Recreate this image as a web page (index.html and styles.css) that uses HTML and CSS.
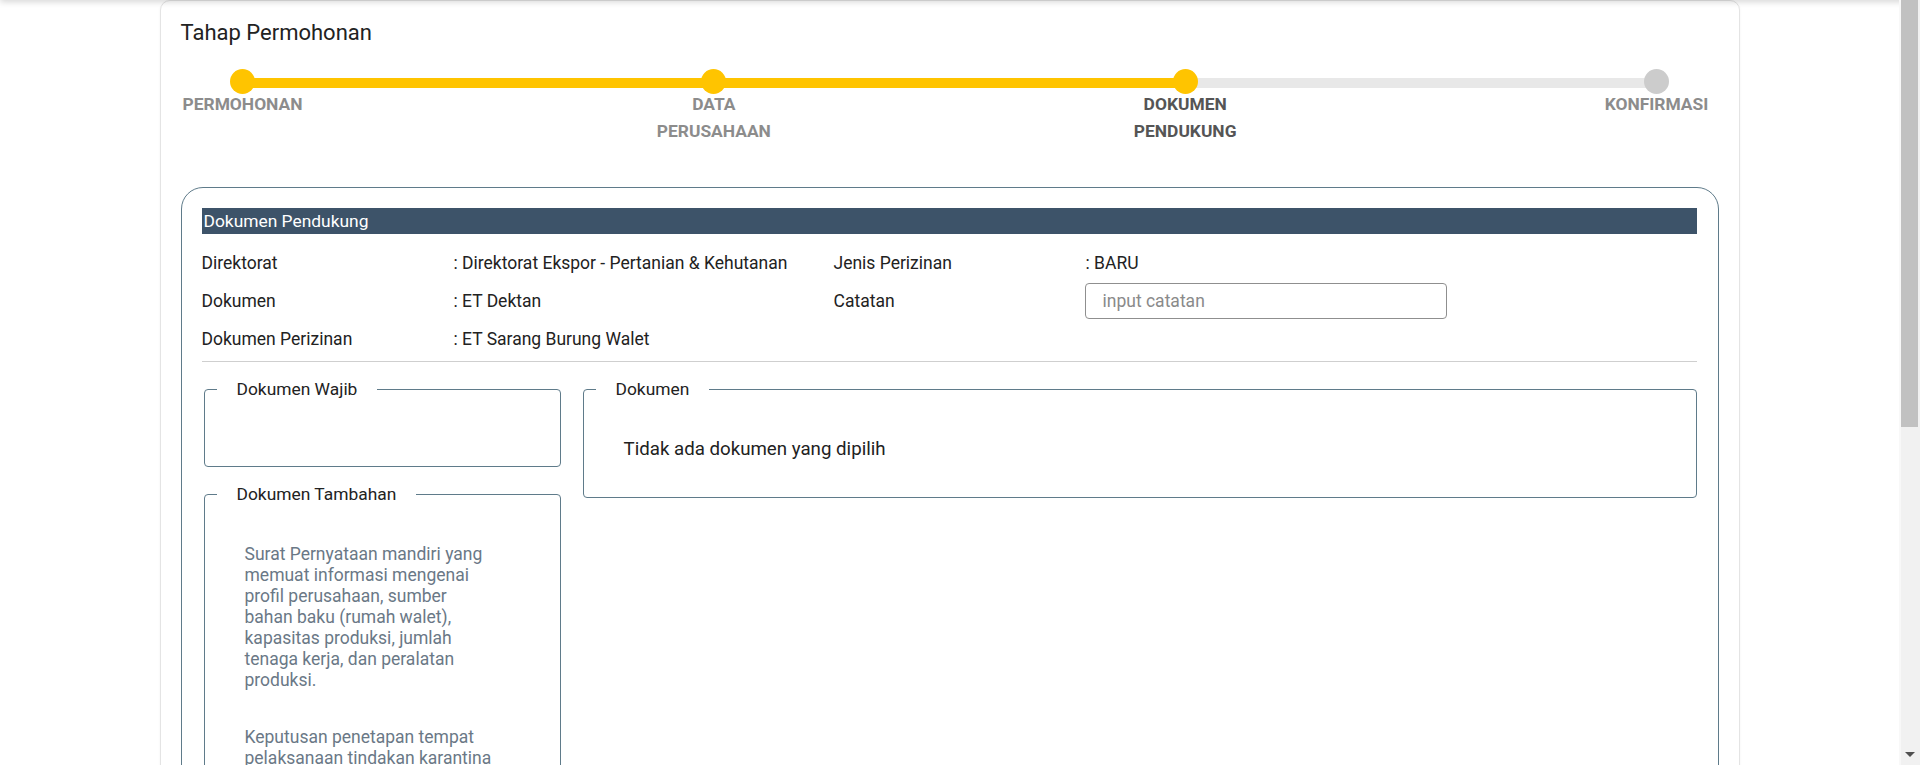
FILE: index.html
```html
<!DOCTYPE html>
<html lang="id">
<head>
<meta charset="utf-8">
<title>Tahap Permohonan</title>
<link rel="stylesheet" href="styles.css">
</head>
<body>
<div class="topshade"></div>
<main class="page">
  <section class="card">
    <h2 class="card-title">Tahap Permohonan</h2>
    <ol class="steps">
      <li class="step done"><span class="dot"></span><span class="label">PERMOHONAN</span></li>
      <li class="step done"><span class="dot"></span><span class="label">DATA PERUSAHAAN</span></li>
      <li class="step current"><span class="dot"></span><span class="label">DOKUMEN PENDUKUNG</span></li>
      <li class="step"><span class="dot"></span><span class="label">KONFIRMASI</span></li>
    </ol>

    <div class="panel">
      <div class="panel-head">Dokumen Pendukung</div>
      <div class="info">
        <div class="info-row">
          <span class="info-label">Direktorat</span>
          <span class="info-value">: Direktorat Ekspor - Pertanian &amp; Kehutanan</span>
          <span class="info-label">Jenis Perizinan</span>
          <span class="info-value">: BARU</span>
        </div>
        <div class="info-row">
          <span class="info-label">Dokumen</span>
          <span class="info-value">: ET Dektan</span>
          <span class="info-label">Catatan</span>
          <span class="info-value"><input class="note-input" type="text" placeholder="input catatan"></span>
        </div>
        <div class="info-row">
          <span class="info-label">Dokumen Perizinan</span>
          <span class="info-value">: ET Sarang Burung Walet</span>
          <span class="info-label"></span>
          <span class="info-value"></span>
        </div>
      </div>
      <hr class="sep">
      <div class="docs">
        <div class="docs-left">
          <fieldset class="box">
            <legend>Dokumen Wajib</legend>
            <ul class="doc-list empty"></ul>
          </fieldset>
          <fieldset class="box extra">
            <legend>Dokumen Tambahan</legend>
            <ul class="doc-list muted">
              <li>Surat Pernyataan mandiri yang<br>memuat informasi mengenai<br>profil perusahaan, sumber<br>bahan baku (rumah walet),<br>kapasitas produksi, jumlah<br>tenaga kerja, dan peralatan<br>produksi.</li>
              <li>Keputusan penetapan tempat<br>pelaksanaan tindakan karantina<br>hewan dari Badan Karantina.</li>
            </ul>
          </fieldset>
        </div>
        <fieldset class="box selected">
          <legend>Dokumen</legend>
          <ul class="doc-list">
            <li class="none">Tidak ada dokumen yang dipilih</li>
          </ul>
        </fieldset>
      </div>
    </div>
  </section>
</main>
<div class="scrollbar"><div class="thumb"></div><div class="arrow-down"></div></div>
</body>
</html>
```
FILE: styles.css
```css
* { box-sizing: border-box; }
html, body { height: 100%; }
body {
  margin: 0;
  overflow: hidden;
  background: #fff;
  font-family: Roboto, "Liberation Sans", Arial, sans-serif;
  font-size: 17.5px;
  color: #222;
}
.topshade {
  position: fixed;
  top: -10px;
  left: 0;
  right: 0;
  height: 10px;
  box-shadow: 0 2px 6px rgba(0,0,0,0.16);
  z-index: 5;
}
.page {
  width: calc(100% - 21px);
}
.card {
  width: 1580px;
  margin: 0 auto;
  background: #fff;
  border: 1px solid #e4e4e4;
  border-radius: 10px;
  box-shadow: 0 1px 3px rgba(0,0,0,0.05);
  padding: 18px 20px 40px;
  min-height: 900px;
}
.card-title {
  margin: 0;
  font-size: 22px;
  font-weight: 400;
  line-height: 28px;
  color: #222;
}
.steps {
  list-style: none;
  margin: 22px 0 0;
  padding: 0;
  display: flex;
  justify-content: space-between;
  background:
    linear-gradient(#ffc400, #ffc400) 62px 9px / calc((100% - 124px) * 2 / 3) 10px no-repeat,
    linear-gradient(#e8e8e8, #e8e8e8) 62px 9px / calc(100% - 124px) 10px no-repeat;
}
.step {
  width: 124px;
  display: flex;
  flex-direction: column;
  align-items: center;
}
.dot {
  width: 25px;
  height: 25px;
  border-radius: 50%;
  background: #cccccc;
}
.step.done .dot, .step.current .dot { background: #ffc400; }
.label {
  margin-top: -3px;
  text-align: center;
  font-weight: 700;
  font-size: 17.4px;
  line-height: 27px;
  color: #8c8c8c;
}
.step.current .label { color: #555; }

.panel {
  margin-top: 42px;
  border: 1px solid #5f7b8a;
  border-radius: 22px;
  padding: 20px 21px 40px 20px;
  min-height: 700px;
}
.panel-head {
  background: #3d5369;
  color: #fff;
  height: 26px;
  line-height: 26px;
  padding-left: 2px;
  font-size: 17.4px;
}
.info { margin-top: 10px; }
.info-row {
  display: grid;
  grid-template-columns: 252px 380px 252px 1fr;
  align-items: center;
  height: 38px;
}
.note-input {
  display: block;
  width: 362px;
  height: 36px;
  margin-left: -1px;
  border: 1px solid #8f8f8f;
  border-radius: 4px;
  padding: 0 17px;
  font: inherit;
  color: #222;
  outline: none;
}
.note-input::placeholder { color: #8a8a8a; }
.sep {
  margin: 3px 0 0;
  border: 0;
  border-top: 1px solid #cfcfcf;
  height: 0;
}
.docs {
  margin-top: 17px;
  padding-left: 2px;
  display: grid;
  grid-template-columns: 357px 1fr;
  column-gap: 22px;
  align-items: start;
}
.docs-left {
  display: flex;
  flex-direction: column;
  gap: 17px;
}
.box {
  margin: 0;
  min-width: 0;
  border: 1px solid #5f7b8a;
  border-radius: 4px;
  padding: 12px 12px 19px;
}
.box legend {
  padding: 0 20px;
  line-height: 20px;
  font-size: 17.4px;
  color: #222;
}
.doc-list {
  list-style: none;
  margin: 0;
  padding: 10px 0 0 28px;
  line-height: 21px;
}
.doc-list.empty { min-height: 36px; }
.doc-list li { padding: 18px 0; }
.doc-list li.none { font-size: 18.7px; }
.doc-list.muted li {
  white-space: nowrap;
  color: #6a7886;
}
.extra { min-height: 600px; }

.scrollbar {
  position: fixed;
  top: 0;
  right: 0;
  width: 21px;
  height: 100%;
  background: #f1f1f1;
  border-left: 2px solid #f8f8f8;
  z-index: 10;
}
.thumb {
  width: 17px;
  height: 427px;
  background: #c1c1c1;
}
.arrow-down {
  position: absolute;
  bottom: 8px;
  left: 4px;
  width: 0;
  height: 0;
  border-left: 5px solid transparent;
  border-right: 5px solid transparent;
  border-top: 5px solid #505050;
}
```
